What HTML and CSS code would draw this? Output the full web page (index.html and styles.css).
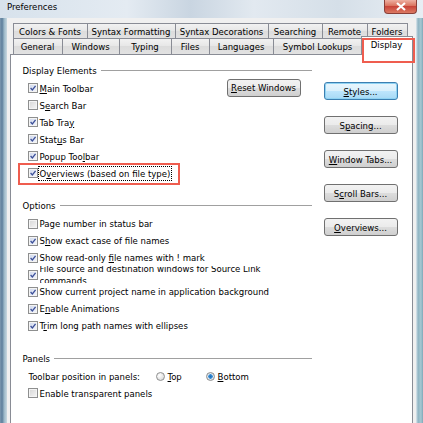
FILE: index.html
```html
<!DOCTYPE html>
<html lang="en">
<head>
    <meta charset="UTF-8">
    <title>Preferences</title>
    <link rel="stylesheet" href="styles.css">
</head>
<body>
    <div class="window">
        <div class="titlebar">
            <span class="title">Preferences</span>
            <div class="close">
                <svg width="12" height="9" viewBox="0 0 12 9"><path d="M2 1 L10 8 M10 1 L2 8" stroke="#fff" stroke-width="2.2"/></svg>
            </div>
        </div>

        <div class="frame">
            <div class="glass-left"></div>

            <div class="client">
                <div class="tabs">
                    <div class="tabrow back">
                        <div class="tab w74">Colors &amp; Fonts</div>
                        <div class="tab w88">Syntax Formatting</div>
                        <div class="tab w93">Syntax Decorations</div>
                        <div class="tab w54">Searching</div>
                        <div class="tab w45">Remote</div>
                        <div class="tab w41 last">Folders</div>
                    </div>
                    <div class="tabrow front">
                        <div class="tab w49">General</div>
                        <div class="tab w57">Windows</div>
                        <div class="tab w52">Typing</div>
                        <div class="tab w38">Files</div>
                        <div class="tab w64">Languages</div>
                        <div class="tab w89">Symbol Lookups</div>
                        <div class="tab selected">Display<div class="mark tabmark"></div></div>
                    </div>
                </div>

                <div class="panel">
                    <div class="groups">
                        <div class="group">
                            <div class="group-head"><span>Display Elements</span><div class="rule"></div></div>
                            <div class="group-body">
                                <div class="list">
                                    <div class="row"><span class="cb on"><svg viewBox="0 0 10 10"><path d="M2 5 L4.2 7.4 L8.2 2.4"/></svg></span><span><u>M</u>ain Toolbar</span></div>
                                    <div class="row"><span class="cb"></span><span>S<u>e</u>arch Bar</span></div>
                                    <div class="row"><span class="cb on"><svg viewBox="0 0 10 10"><path d="M2 5 L4.2 7.4 L8.2 2.4"/></svg></span><span>Tab Tra<u>y</u></span></div>
                                    <div class="row"><span class="cb on"><svg viewBox="0 0 10 10"><path d="M2 5 L4.2 7.4 L8.2 2.4"/></svg></span><span>Stat<u>u</u>s Bar</span></div>
                                    <div class="row"><span class="cb on"><svg viewBox="0 0 10 10"><path d="M2 5 L4.2 7.4 L8.2 2.4"/></svg></span><span>Popup Too<u>l</u>bar</span></div>
                                    <div class="row marked"><span class="cb on"><svg viewBox="0 0 10 10"><path d="M2 5 L4.2 7.4 L8.2 2.4"/></svg></span><span class="focus">O<u>v</u>erviews (based on file type)</span><div class="mark rowmark"></div></div>
                                </div>
                                <div class="btn reset"><u>R</u>eset Windows</div>
                            </div>
                        </div>

                        <div class="group">
                            <div class="group-head"><span>Options</span><div class="rule"></div></div>
                            <div class="list">
                                <div class="row"><span class="cb"></span><span>Page number in status bar</span></div>
                                <div class="row"><span class="cb on"><svg viewBox="0 0 10 10"><path d="M2 5 L4.2 7.4 L8.2 2.4"/></svg></span><span>S<u>h</u>ow exact case of file names</span></div>
                                <div class="row"><span class="cb on"><svg viewBox="0 0 10 10"><path d="M2 5 L4.2 7.4 L8.2 2.4"/></svg></span><span>Show read-only <u>f</u>ile names with ! mark</span></div>
                                <div class="row"><span class="cb on"><svg viewBox="0 0 10 10"><path d="M2 5 L4.2 7.4 L8.2 2.4"/></svg></span><span class="clipped"><span>File source and destination windows for Source Link commands</span></span></div>
                                <div class="row"><span class="cb on"><svg viewBox="0 0 10 10"><path d="M2 5 L4.2 7.4 L8.2 2.4"/></svg></span><span>Show current project name in application background</span></div>
                                <div class="row"><span class="cb on"><svg viewBox="0 0 10 10"><path d="M2 5 L4.2 7.4 L8.2 2.4"/></svg></span><span>E<u>n</u>able Animations</span></div>
                                <div class="row"><span class="cb on"><svg viewBox="0 0 10 10"><path d="M2 5 L4.2 7.4 L8.2 2.4"/></svg></span><span>T<u>r</u>im long path names with ellipses</span></div>
                            </div>
                        </div>

                        <div class="group">
                            <div class="group-head"><span>Panels</span><div class="rule"></div></div>
                            <div class="list">
                                <div class="row radios">
                                    <span class="radio-label">Toolbar position in panels:</span>
                                    <span class="radio-item"><span class="rb"></span><span><u>T</u>op</span></span>
                                    <span class="radio-item"><span class="rb on"></span><span><u>B</u>ottom</span></span>
                                </div>
                                <div class="row"><span class="cb"></span><span>Enable transparent panels</span></div>
                            </div>
                        </div>
                    </div>

                    <div class="buttons">
                        <div class="btn default"><u>S</u>tyles...</div>
                        <div class="btn">S<u>p</u>acing...</div>
                        <div class="btn"><u>W</u>indow Tabs...</div>
                        <div class="btn">S<u>c</u>roll Bars...</div>
                        <div class="btn"><u>O</u>verviews...</div>
                    </div>
                </div>
            </div>

            <div class="glass-right"></div>
        </div>
    </div>
</body>
</html>
```

FILE: styles.css
```css
html, body {
    margin: 0;
    padding: 0;
}

body {
    width: 423px;
    height: 423px;
    overflow: hidden;
    font-family: "DejaVu Sans Condensed", "DejaVu Sans", sans-serif;
    font-stretch: condensed;
    font-size: 9.5px;
    color: #000;
}

.window {
    display: flex;
    flex-direction: column;
    height: 423px;
    background: #b9cfdb;
}

.titlebar {
    height: 18px;
    display: flex;
    align-items: flex-start;
    justify-content: space-between;
    background: linear-gradient(to right, #d7e2ec, #e4ebf2 30%, #c9d5e1 45%, #e2e9f0 60%, #d5dfe8 80%, #e8eef4);
}

.title {
    margin-left: 7px;
    margin-top: 1px;
    font-size: 9.5px;
}

.close {
    width: 33px;
    height: 14px;
    margin-right: 6px;
    display: flex;
    align-items: center;
    justify-content: center;
    border: 1px solid #8a3f38;
    border-top: none;
    border-radius: 0 0 4px 4px;
    box-sizing: border-box;
    background: linear-gradient(#eeb0a2, #d86c56 50%, #c9453a 50%, #db7a64);
}

.frame {
    flex: 1;
    display: flex;
}

.glass-left {
    width: 7px;
    background: linear-gradient(to right, #7c98b0, #5d7f9c 30%, #9bb8c8 60%, #c8d8e0);
}

.glass-right {
    width: 8px;
    background: linear-gradient(to right, #dfe8ee, #8fb4c3 30%, #a7c8d2 70%, #7ea7b7);
}

.client {
    flex: 1;
    display: flex;
    flex-direction: column;
    background: #f0f0f0;
    padding: 5px 3px 0 3px;
}

/* tabs */

.tabs {
    margin-left: 3px;
}

.tabrow {
    display: flex;
}

.tabrow.back {
    height: 15px;
}

.tabrow.front {
    height: 16px;
}

.tab {
    box-sizing: border-box;
    display: flex;
    align-items: center;
    justify-content: center;
    border-top: 1px solid #898c95;
    border-left: 1px solid #898c95;
    background: linear-gradient(#f2f2f2, #e6e6e6 50%, #dcdcdc 50%, #e2e2e2);
    white-space: nowrap;
}

.tab.last {
    border-right: 1px solid #898c95;
}

.w38 { width: 38px; }
.w41 { width: 41px; }
.w45 { width: 45px; }
.w49 { width: 49px; }
.w52 { width: 52px; }
.w54 { width: 54px; }
.w57 { width: 57px; }
.w64 { width: 64px; }
.w74 { width: 74px; }
.w88 { width: 88px; }
.w89 { width: 89px; }
.w93 { width: 93px; }

.tab.selected {
    position: relative;
    z-index: 2;
    width: 52px;
    height: 19px;
    margin-top: -2px;
    margin-left: -1px;
    align-items: flex-start;
    padding-top: 2px;
    border-right: 1px solid #898c95;
    background: #fff;
}

.mark {
    position: absolute;
    border: 2px solid #ef5d4f;
    box-sizing: border-box;
}

.tabmark {
    left: 0;
    top: 1px;
    width: 53px;
    height: 25px;
}

/* panel */

.panel {
    flex: 1;
    display: grid;
    grid-template-columns: 289px 74px;
    column-gap: 12px;
    align-items: start;
    background: #fff;
    border: 1px solid #898c95;
    border-bottom: none;
    padding: 9px 0 0 12px;
}

.group + .group {
    margin-top: 18px;
}

.group-head {
    display: flex;
    align-items: center;
    height: 12px;
    gap: 4px;
}

.rule {
    flex: 1;
    height: 1px;
    background: #a0a0a0;
}

.group-body {
    display: flex;
    align-items: flex-start;
}

.list {
    flex: 1;
    padding-top: 3.5px;
    padding-left: 5px;
}

.row {
    display: flex;
    align-items: center;
    height: 17px;
    gap: 2px;
    white-space: nowrap;
}

.row.marked {
    position: relative;
}

.rowmark {
    left: -10px;
    top: -2px;
    width: 162px;
    height: 22px;
}

.focus {
    outline: 1px dotted #000;
    outline-offset: 1px;
}

.cb {
    box-sizing: border-box;
    width: 10px;
    height: 10px;
    flex: none;
    border: 1px solid #8e8f8f;
    background: linear-gradient(135deg, #d6d6d6, #f6f6f6);
    box-shadow: inset 0 0 0 1px #f4f4f4;
}

.cb.on {
    background: linear-gradient(135deg, #cfd8ec, #f3f5fb);
}

.cb svg {
    display: block;
    width: 8px;
    height: 8px;
}

.cb svg path {
    fill: none;
    stroke: #3b4f98;
    stroke-width: 1.6;
}

.clipped {
    height: 17px;
    overflow: hidden;
    display: flex;
    align-items: center;
    width: 300px;
}

.clipped span {
    white-space: normal;
    width: 265px;
    line-height: 12px;
}

.radios {
    padding-left: 1px;
    gap: 0;
}

.radio-label {
    width: 127px;
    flex: none;
}

.radio-item {
    display: flex;
    align-items: center;
    gap: 3px;
    width: 50px;
    flex: none;
}

.rb {
    box-sizing: border-box;
    width: 9px;
    height: 9px;
    border-radius: 50%;
    border: 1px solid #8e8f8f;
    background: radial-gradient(circle at 35% 35%, #fff, #d2d2d2);
}

.rb.on {
    background: radial-gradient(circle, #1f6fb8 0, #3b8fd6 2px, #e8eef4 2.5px, #cfd6dd 4px);
}

/* buttons */

.btn {
    box-sizing: border-box;
    width: 74px;
    height: 18px;
    display: flex;
    align-items: center;
    justify-content: center;
    border: 1px solid #707070;
    border-radius: 3px;
    background: linear-gradient(#f2f2f2, #ebebeb 50%, #dddddd 50%, #cfcfcf);
    white-space: nowrap;
}

.btn.reset {
    margin-top: 2.5px;
    margin-right: 11px;
}

.btn.default {
    border-color: #3c7fb1;
    background: linear-gradient(#eaf6fd, #d9f0fc 50%, #bee6fd 50%, #a7d9f5);
    box-shadow: inset 0 0 0 1px #8fd3f3;
}

.buttons {
    display: flex;
    flex-direction: column;
    gap: 16px;
    margin-top: 18px;
}
```
